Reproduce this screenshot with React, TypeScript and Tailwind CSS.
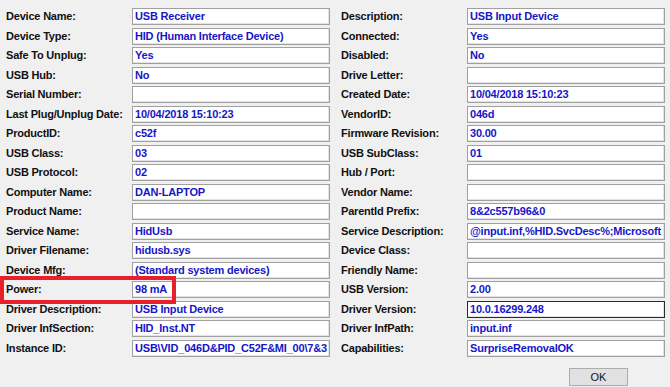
const left: [string, string][] = [
  ['Device Name:', 'USB Receiver'],
  ['Device Type:', 'HID (Human Interface Device)'],
  ['Safe To Unplug:', 'Yes'],
  ['USB Hub:', 'No'],
  ['Serial Number:', ''],
  ['Last Plug/Unplug Date:', '10/04/2018 15:10:23'],
  ['ProductID:', 'c52f'],
  ['USB Class:', '03'],
  ['USB Protocol:', '02'],
  ['Computer Name:', 'DAN-LAPTOP'],
  ['Product Name:', ''],
  ['Service Name:', 'HidUsb'],
  ['Driver Filename:', 'hidusb.sys'],
  ['Device Mfg:', '(Standard system devices)'],
  ['Power:', '98 mA'],
  ['Driver Description:', 'USB Input Device'],
  ['Driver InfSection:', 'HID_Inst.NT'],
  ['Instance ID:', 'USB\\VID_046D&PID_C52F&MI_00\\7&3'],
];

const right: [string, string][] = [
  ['Description:', 'USB Input Device'],
  ['Connected:', 'Yes'],
  ['Disabled:', 'No'],
  ['Drive Letter:', ''],
  ['Created Date:', '10/04/2018 15:10:23'],
  ['VendorID:', '046d'],
  ['Firmware Revision:', '30.00'],
  ['USB SubClass:', '01'],
  ['Hub / Port:', ''],
  ['Vendor Name:', ''],
  ['ParentId Prefix:', '8&2c557b96&0'],
  ['Service Description:', '@input.inf,%HID.SvcDesc%;Microsoft'],
  ['Device Class:', ''],
  ['Friendly Name:', ''],
  ['USB Version:', '2.00'],
  ['Driver Version:', '10.0.16299.248'],
  ['Driver InfPath:', 'input.inf'],
  ['Capabilities:', 'SurpriseRemovalOK'],
];

function Field({ value, focused }: { value: string; focused?: boolean }) {
  return (
    <div
      className={`h-[17px] bg-white border overflow-hidden whitespace-nowrap pl-[2px] leading-[15px] text-[#1616c8] shadow-[inset_-1px_-1px_0_#e3e3e3] ${
        focused ? 'border-[#2a2a2a]' : 'border-[#a0a0a0]'
      }`}
    >
      {value}
    </div>
  );
}

export default function App() {
  return (
    <div
      className="relative w-[670px] h-[387px] bg-[#f0f0f0] overflow-hidden text-[11px] font-bold tracking-[-0.2px]"
      style={{ fontFamily: '"Liberation Sans", Arial, sans-serif' }}
    >
      <div className="grid grid-cols-[126px_198px_137px_198px] gap-y-[2.5px] pl-[6px] pt-[8px]">
        {left.map(([l, v], i) => (
          <div key={l} className="contents">
            <div className="h-[17px] leading-[17px] text-[#111]">{l}</div>
            <Field value={v} />
            <div className="h-[17px] leading-[17px] pl-[11px] text-[#111]">{right[i][0]}</div>
            <Field value={right[i][1]} focused={right[i][0] === 'Driver Version:'} />
          </div>
        ))}
      </div>

      <div className="flex justify-end pr-[42px] pt-[11px]">
        <button className="w-[59px] h-[18px] bg-[#e1e1e1] border border-[#adadad] text-[11px] font-normal leading-[16px] text-[#111] tracking-normal">
          OK
        </button>
      </div>

      {/* annotation highlight */}
      <div className="absolute left-0 top-[276px] w-[176px] h-[28px] border-[4px] border-[#e8202a]" />
    </div>
  );
}
